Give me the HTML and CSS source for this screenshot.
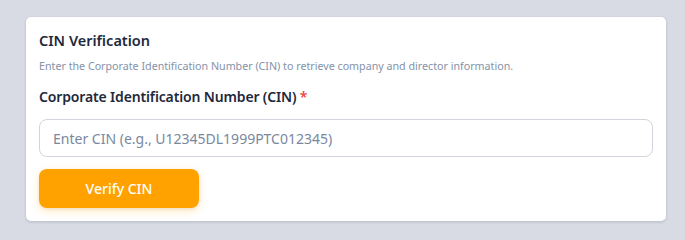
FILE: index.html
```html
<!DOCTYPE html>
<html lang="en">
<head>
<meta charset="utf-8">
<title>CIN Verification</title>
<link rel="stylesheet" href="styles.css">
</head>
<body>
<section class="card">
  <h2 class="card-title">CIN Verification</h2>
  <p class="card-sub">Enter the Corporate Identification Number (CIN) to retrieve company and director information.</p>
  <label class="field-label" for="cin">Corporate Identification Number (CIN) <span class="req">*</span></label>
  <input class="field-input" id="cin" type="text" placeholder="Enter CIN (e.g., U12345DL1999PTC012345)">
  <button class="btn-verify" type="button">Verify CIN</button>
</section>
</body>
</html>
```
FILE: styles.css
```css
* { box-sizing: border-box; }
html, body { margin: 0; padding: 0; }
body {
  background: #d8dbe3;
  font-family: "Noto Sans", "Open Sans", sans-serif;
  width: 685px;
  height: 237px;
  padding: 17px 19px 0 26px;
}
.card {
  width: 640px;
  height: 204px;
  background: #ffffff;
  border-radius: 5px;
  box-shadow: 0 1px 3px rgba(30, 40, 60, 0.18);
  padding: 13px 13px 13px 13px;
  display: flex;
  flex-direction: column;
  align-items: flex-start;
}
.card-title {
  margin: 0;
  font-size: 14.5px;
  font-weight: 600;
  color: #1e293b;
  line-height: 20px;
}
.card-sub {
  margin: 9px 0 0;
  font-size: 10.7px;
  color: #8592a8;
  line-height: 14px;
}
.field-label {
  margin-top: 14px;
  font-size: 14px;
  font-weight: 600;
  letter-spacing: -0.15px;
  color: #1e293b;
  line-height: 20px;
}
.req { color: #ef4444; }
.field-input {
  margin-top: 12px;
  width: 100%;
  height: 38px;
  border: 1px solid #d1d5db;
  border-radius: 8px;
  padding: 0 13px;
  font-family: inherit;
  font-size: 14px;
  color: #1e293b;
  background: #fff;
  outline: none;
}
.field-input::placeholder { color: #7a889e; }
.btn-verify {
  margin-top: 12px;
  width: 160px;
  height: 39px;
  border: none;
  border-radius: 8px;
  background: #ffa200;
  color: #ffffff;
  font-family: inherit;
  font-size: 14px;
  font-weight: 500;
  box-shadow: 0 3px 8px rgba(255, 162, 0, 0.25), 0 1px 3px rgba(0,0,0,0.08);
  cursor: pointer;
}
```
